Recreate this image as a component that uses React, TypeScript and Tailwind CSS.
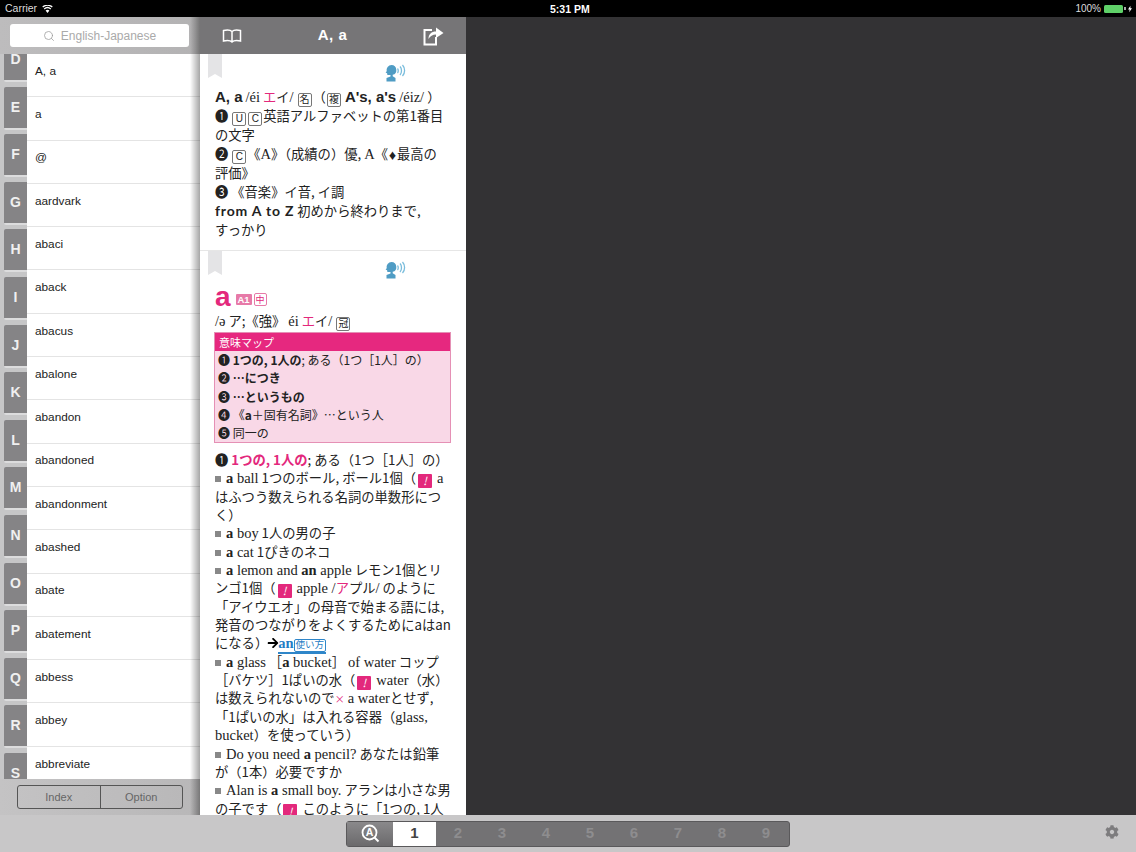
import React from "react";
import { FaCog, FaArrowRight } from "react-icons/fa";
import { Search } from "lucide-react";

const tabs = "DEFGHIJKLMNOPQRS".split("");
const words = ["A, a", "a", "@", "aardvark", "abaci", "aback", "abacus", "abalone", "abandon", "abandoned", "abandonment", "abashed", "abate", "abatement", "abbess", "abbey", "abbreviate"];

type Kids = { children: React.ReactNode };

function Ribbon() {
  return (
    <svg width="14" height="24" viewBox="0 0 14 24" className="shrink-0">
      <polygon points="0,0 14,0 14,24 7,20 0,24" fill="#e4e4e6" />
    </svg>
  );
}

function Speaker() {
  return (
    <svg width="21" height="18" viewBox="0 0 21 18" className="shrink-0">
      <path d="M6.500 1a5 5 0 0 0-4.800 6.200L.6 8.600l1.500.7.3 1.700h3.100v1.500L1.500 14v3.500h9V14l-2.800-1.700v-1.500A5 5 0 0 0 6.500 1z" fill="#4f9cc4" />
      <path d="M12.500 4.500c1 1 1 3.500 0 4.500M15 2.500c2 2 2 6.500 0 8.500M17.500 1c2.800 3 2.800 8 0 11" fill="none" stroke="#78bcdc" strokeWidth="1.300" />
    </svg>
  );
}

function Box({ children, className = "" }: Kids & { className?: string }) {
  return (
    <span className={`inline-flex items-center justify-center h-[14px] min-w-[14px] mx-px rounded-[2px] border border-[#777] text-[10px] leading-none align-[-1px] font-['Liberation_Sans','Noto_Sans_CJK_JP',sans-serif] ${className}`}>
      {children}
    </span>
  );
}

function Bang() {
  return (
    <span className="inline-flex items-center justify-center w-[14px] h-[14px] mx-[2px] bg-[#e3287c] rounded-[1px] text-white text-[11px] italic leading-none align-[-2px]">!</span>
  );
}

function Line({ children, className = "" }: Kids & { className?: string }) {
  return <div className={`h-[1lh] whitespace-nowrap ${className}`}>{children}</div>;
}

function L({ children }: Kids) {
  return <span className="font-['Liberation_Serif',serif] text-[14.500px]">{children}</span>;
}

function Sq() {
  return <span className="inline-block w-[6px] h-[6px] bg-[#888] mr-[5px] align-[1px]" />;
}

function B({ children }: Kids) {
  return <b className="font-bold">{children}</b>;
}

function P({ children }: Kids) {
  return <span className="text-[#e3287c]">{children}</span>;
}

function Head({ children }: Kids) {
  return <span className="font-['Liberation_Sans'] font-bold text-[15px]">{children}</span>;
}

function EntryTop() {
  return (
    <div className="flex items-start pl-2 h-[33px]">
      <Ribbon />
      <div className="ml-[163px] mt-[10px]">
        <Speaker />
      </div>
    </div>
  );
}

function MapRow({ children }: Kids) {
  return <div className="h-[18.300px] leading-[18.300px] pl-[3px] whitespace-nowrap">{children}</div>;
}

export default function App() {
  return (
    <div className="w-[1136px] h-[852px] overflow-hidden flex flex-col relative bg-[#333333] font-['Liberation_Sans','Noto_Sans_CJK_JP',sans-serif]">
      {/* Status bar */}
      <div className="h-[17px] shrink-0 bg-black text-white text-[10.500px] flex items-center justify-between pl-[5px] pr-[4px] relative">
        <div className="flex items-center gap-[5px]">
          <span className="text-[#ddd]">Carrier</span>
          <svg width="11" height="8" viewBox="0 0 11 8">
            <path d="M5.500 8 3.600 5.600a3 3 0 0 1 3.800 0zM2.600 4.400l-.8-1a5.800 5.800 0 0 1 7.400 0l-.8 1a4.500 4.500 0 0 0-5.800 0zM1.100 2.500.3 1.500a8.200 8.200 0 0 1 10.400 0l-.8 1a7 7 0 0 0-8.800 0z" fill="#fff" />
          </svg>
        </div>
        <span className="absolute left-[550px] top-[2px] font-bold text-[10.500px] text-white">5:31 PM</span>
        <div className="flex items-center">
          <span className="text-[#ddd] text-[10px] mr-[3px]">100%</span>
          <div className="w-[19px] h-[8px] rounded-[1.500px] bg-[#5fd068]" />
          <div className="w-[2px] h-[3px] bg-[#aaa] ml-px mr-[2px]" />
          <svg width="4" height="8" viewBox="0 0 5 8"><polygon points="3,0 0,4.500 2,4.500 1.500,8 5,3 3,3" fill="#fff" /></svg>
        </div>
      </div>

      {/* Main */}
      <div className="flex h-[798px] shrink-0 relative">
        {/* Left panel */}
        <div className="w-[200px] shrink-0 flex flex-col bg-white">
          <div className="h-[37px] shrink-0 bg-gradient-to-r from-[#bdbcbd] to-[#b3b2b3] pl-[10px] pr-[11px] pt-[7px]">
            <div className="h-[23px] rounded-[3px] bg-white flex items-center justify-center gap-[6px] text-[#aaaaaa] text-[12px]">
              <Search size={12} strokeWidth={1.500} className="text-[#999]" />
              <span>English-Japanese</span>
            </div>
          </div>
          <div className="flex-1 min-h-0 flex overflow-hidden">
            <div className="w-[27px] shrink-0 bg-[#c6c6c7] -mt-[15px] pl-[4px]">
              {tabs.map((t) => (
                <div key={t} className="w-[23px] h-[43px] mb-[4.600px] bg-[#858486] border-b-2 border-[#dcdcdd] rounded-l-[2px] flex items-center justify-center text-[#f0f0f0] font-bold text-[14px]">
                  {t}
                </div>
              ))}
            </div>
            <div className="flex-1 min-w-0 text-[11.800px] text-[#222]">
              {words.map((w) => (
                <div key={w} className="h-[43.300px] border-b border-[#e4e4e4] pl-[8px] pb-[7px] flex items-center">
                  {w}
                </div>
              ))}
            </div>
          </div>
          <div className="h-[36px] shrink-0 bg-gradient-to-r from-[#c4c3c4] to-[#b8b7b8] pl-[17px] pr-[17px] pt-[6px]">
            <div className="h-[24px] flex border border-[#555] rounded-[3px] text-[11px] text-[#666]">
              <div className="flex-1 flex items-center justify-center border-r border-[#555]">Index</div>
              <div className="flex-1 flex items-center justify-center">Option</div>
            </div>
          </div>
        </div>

        {/* Dictionary panel */}
        <div className="w-[266px] shrink-0 flex flex-col bg-white">
          <div className="h-[37px] shrink-0 bg-[#767577] flex items-center justify-between pl-[22px] pr-[22px] text-white">
            <svg width="20" height="14" viewBox="0 0 20 14" fill="none" stroke="#fff" strokeWidth="1.500">
              <path d="M10 2.500C8.500 1 5 .8 1.500 1.500V12C5 11.300 8.500 11.500 10 13c1.500-1.500 5-1.700 8.500-1V1.500C15 .8 11.500 1 10 2.500zM10 2.500V13" />
            </svg>
            <span className="font-bold text-[15px] tracking-[0.5px]">A, a</span>
            <svg width="21" height="20" viewBox="0 0 21 20" fill="none">
              <path d="M9 4H1.500v14.500H13V11" stroke="#fff" strokeWidth="2" />
              <path d="M5.500 13c0-5 3-7.500 7.500-7.500V1.500L20.500 7 13 12V8.500c-3.500 0-5.700 1.500-7.500 4.500z" fill="#fff" />
            </svg>
          </div>
          <div className="flex-1 min-h-0 overflow-hidden text-[13.300px] text-[#222] font-['Noto_Sans_CJK_JP',sans-serif]">
            <div className="h-[197px] border-b border-[#e6e6e6]">
              <EntryTop />
              <div className="pl-[15px] leading-[19px]">
                <Line>
                  <Head>A, a</Head> <L>/éi</L> <P>エ</P>イ<L>/</L> <Box>名</Box>（<Box>複</Box> <Head>A's, a's</Head> <L>/éiz/</L> ）
                </Line>
                <Line>❶ <Box>U</Box><Box>C</Box>英語アルファベットの第1番目</Line>
                <Line>の文字</Line>
                <Line>❷ <Box>C</Box>《<L>A</L>》（成績の）優, <L>A</L>《<span className="text-[9px]">♦</span>最高の</Line>
                <Line>評価》</Line>
                <Line>❸ 《音楽》イ音, イ調</Line>
                <Line><span className="font-['Lato'] font-bold text-[14px] tracking-[0.8px]">from A to Z</span> 初めから終わりまで,</Line>
                <Line>すっかり</Line>
              </div>
            </div>
            <div className="h-[36px]"><EntryTop /></div>
            <div className="pl-[15px] pr-[15px]">
              <div className="flex items-center h-[25px]">
                <span className="font-['Liberation_Sans'] font-bold text-[28px] leading-none text-[#e3287c] -mt-[5px] mr-[5px]">a</span>
                <span className="w-[16px] h-[11px] flex items-center justify-center bg-[#e77aa8] text-white text-[9.500px] font-bold font-['Liberation_Sans'] leading-none rounded-[1px]">A1</span>
                <span className="w-[13px] h-[13px] ml-[2px] flex items-center justify-center border border-[#e77aa8] text-[#e3287c] text-[9px] leading-none rounded-[2px]">中</span>
              </div>
              <Line className="leading-[18px]"><L>/ə</L> ア;《強》 <L>éi</L> <P>エ</P>イ<L>/</L> <Box>冠</Box></Line>
              <div className="mt-[2px] -ml-px w-[237px] h-[111px] border border-[#e590b5] bg-[#f9d8e7] text-[12px]">
                <div className="h-[18px] bg-[#e6287f] text-white text-[11px] leading-[18px] pl-[4px]">意味マップ</div>
                <MapRow>❶ <B>1つの, 1人の</B>; ある（1つ［1人］の）</MapRow>
                <MapRow>❷ <B>…につき</B></MapRow>
                <MapRow>❸ <B>…というもの</B></MapRow>
                <MapRow>❹ 《<B>a</B>＋固有名詞》…という人</MapRow>
                <MapRow>❺ 同一の</MapRow>
              </div>
              <div className="mt-[8px] leading-[18.350px]">
                <Line>❶ <span className="text-[#e3287c] font-bold">1つの, 1人の</span>; ある（1つ［1人］の）</Line>
                <Line><Sq /><L><B>a</B> ball</L> 1つのボール, ボール1個（<Bang /> <L>a</L></Line>
                <Line>はふつう数えられる名詞の単数形につ</Line>
                <Line>く）</Line>
                <Line><Sq /><L><B>a</B> boy</L> 1人の男の子</Line>
                <Line><Sq /><L><B>a</B> cat</L> 1ぴきのネコ</Line>
                <Line><Sq /><L><B>a</B> lemon and <B>an</B> apple</L> レモン1個とリ</Line>
                <Line>ンゴ1個（<Bang /> <L>apple /</L><P>ア</P>プル<L>/</L> のように</Line>
                <Line>「アイウエオ」の母音で始まる語には,</Line>
                <Line>発音のつながりをよくするためにaはan</Line>
                <Line>
                  になる）<FaArrowRight className="inline-block align-[-1px] text-black -ml-px" size={12} /><span className="inline-block border-b-2 border-[#2f86c9] leading-[15px] -ml-px"><span className="font-['Liberation_Serif'] text-[14.500px] font-bold text-[#1f7cc4]">an</span><span className="inline-flex items-center h-[13px] border border-[#2f86c9] rounded-[2px] text-[9.500px] text-[#1f7cc4] leading-none px-px font-['Noto_Sans_CJK_JP']">使い方</span></span>
                </Line>
                <Line><Sq /><L><B>a</B> glass</L> ［<L><B>a</B> bucket</L>］ <L>of water</L> コップ</Line>
                <Line>［バケツ］1ぱいの水（<Bang /> <L>water</L>（水）</Line>
                <Line>は数えられないので<span className="text-[#e3287c] text-[10px]">×</span> <L>a water</L>とせず,</Line>
                <Line>「1ぱいの水」は入れる容器（<L>glass,</L></Line>
                <Line><L>bucket</L>）を使っていう）</Line>
                <Line><Sq /><L>Do you need <B>a</B> pencil?</L> あなたは鉛筆</Line>
                <Line>が（1本）必要ですか</Line>
                <Line><Sq /><L>Alan is <B>a</B> small boy.</L> アランは小さな男</Line>
                <Line>の子です（<Bang /> このように「1つの, 1人</Line>
              </div>
            </div>
          </div>
        </div>

        {/* Right empty panel */}
        <div className="flex-1 bg-[#333234]" />

        {/* Drop shadow cast by the dictionary panel */}
        <div className="absolute left-[190px] top-0 bottom-0 w-[10px] bg-gradient-to-r from-transparent to-black/35 pointer-events-none" />
      </div>

      {/* Bottom bar */}
      <div className="flex-1 bg-[#c8c7c8] relative flex items-center justify-center">
        <div className="w-[444px] h-[26px] rounded-[3px] bg-[#737274] border border-[#5a595b] flex items-stretch text-[15px] font-bold text-[#8e8d8f]">
          <div className="w-[46px] bg-gradient-to-b from-[#8a898b] to-[#6b6a6c] flex items-center justify-center">
            <svg width="19" height="19" viewBox="0 0 19 19" fill="none" stroke="#fff">
              <circle cx="8.500" cy="8.500" r="7" strokeWidth="1.800" />
              <path d="M13.500 13.500 17.500 17.500" strokeWidth="2" />
              <text x="8.500" y="12.300" textAnchor="middle" fontSize="10.500" fontWeight="700" fill="#fff" stroke="none" fontFamily="Liberation Sans">A</text>
            </svg>
          </div>
          <div className="w-[43px] bg-white text-[#444] flex items-center justify-center">1</div>
          {[2, 3, 4, 5, 6, 7, 8, 9].map((n) => (
            <div key={n} className="w-[44px] flex items-center justify-center">{n}</div>
          ))}
        </div>
        <FaCog className="absolute left-[1105px] top-[10px] text-[#7d7c7e]" size={14} />
      </div>
    </div>
  );
}
